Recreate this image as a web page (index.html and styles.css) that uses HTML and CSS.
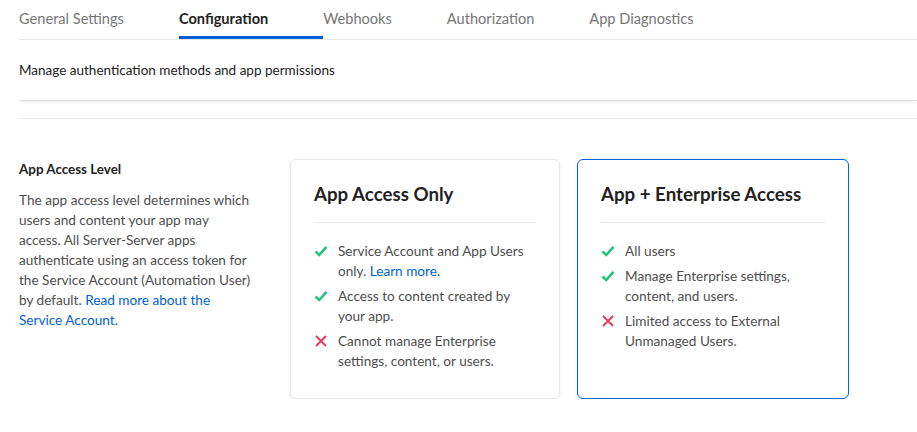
FILE: index.html
```html
<!DOCTYPE html>
<html lang="en">
<head>
  <meta charset="UTF-8">
  <meta name="viewport" content="width=device-width, initial-scale=1.0">
  <title>Configuration</title>
  <link rel="stylesheet" href="styles.css">
</head>
<body>
  <div class="page">
    <nav class="tabs">
      <a class="tab">General Settings</a>
      <a class="tab active">Configuration</a>
      <a class="tab">Webhooks</a>
      <a class="tab">Authorization</a>
      <a class="tab">App Diagnostics</a>
    </nav>

    <div class="page-header">
      <p class="subtitle">Manage authentication methods and app permissions</p>
    </div>

    <div class="section">
      <div class="section-info">
        <h2>App Access Level</h2>
        <p>The app access level determines which users and content your app may access. All Server-Server apps authenticate using an access token for the Service Account (Automation User) by default. <a href="#">Read more about the Service Account</a>.</p>
      </div>

      <div class="cards">
        <div class="card">
          <h3>App Access Only</h3>
          <ul class="features">
            <li>
              <svg class="icon" viewBox="0 0 14 14"><path d="M1.5 7.5 L5.2 11 L12.5 2.8" class="check"/></svg>
              <span>Service Account and App Users only. <a href="#">Learn more.</a></span>
            </li>
            <li>
              <svg class="icon" viewBox="0 0 14 14"><path d="M1.5 7.5 L5.2 11 L12.5 2.8" class="check"/></svg>
              <span>Access to content created by your app.</span>
            </li>
            <li>
              <svg class="icon" viewBox="0 0 14 14"><path d="M2 2 L12 12 M12 2 L2 12" class="cross"/></svg>
              <span>Cannot manage Enterprise settings, content, or users.</span>
            </li>
          </ul>
        </div>

        <div class="card selected">
          <h3>App + Enterprise Access</h3>
          <ul class="features">
            <li>
              <svg class="icon" viewBox="0 0 14 14"><path d="M1.5 7.5 L5.2 11 L12.5 2.8" class="check"/></svg>
              <span>All users</span>
            </li>
            <li>
              <svg class="icon" viewBox="0 0 14 14"><path d="M1.5 7.5 L5.2 11 L12.5 2.8" class="check"/></svg>
              <span>Manage Enterprise settings, content, and users.</span>
            </li>
            <li>
              <svg class="icon" viewBox="0 0 14 14"><path d="M2 2 L12 12 M12 2 L2 12" class="cross"/></svg>
              <span>Limited access to External Unmanaged Users.</span>
            </li>
          </ul>
        </div>
      </div>
    </div>
  </div>
</body>
</html>
```

FILE: styles.css
```css
body {
  font-family: Lato, "Open Sans", sans-serif;
  background-color: #fff;
  color: #222;
  margin: 0;
  padding: 0;
}

a {
  color: #0061d5;
  text-decoration: none;
}

.page {
  padding-left: 19px;
}

.tabs {
  display: flex;
  height: 39px;
  border-bottom: 1px solid #e8e8e8;
}

.tab {
  padding: 9px 55px 8px 0;
  line-height: 20px;
  font-size: 14.6px;
  color: #767676;
  border-bottom: 3px solid transparent;
  cursor: pointer;
}

.tab.active {
  color: #222;
  font-weight: bold;
  border-bottom-color: #0061d5;
}

.page-header {
  height: 60px;
  border-bottom: 1px solid #e2e2e2;
  box-shadow: 0 3px 3px -2px rgba(0, 0, 0, 0.1);
}

.subtitle {
  margin: 0;
  padding-top: 20px;
  line-height: 20px;
  font-size: 13.5px;
  color: #222;
}

.section {
  display: flex;
  margin-top: 17px;
  padding-top: 40px;
  border-top: 1px solid #e8e8e8;
}

.section-info {
  width: 234px;
  margin-right: 37px;
}

.section-info h2 {
  margin: 0 0 11px;
  font-size: 13.4px;
  line-height: 20px;
  font-weight: bold;
  color: #222;
}

.section-info p {
  margin: 0;
  font-size: 13.6px;
  line-height: 20px;
  color: #4e4e4e;
}

.cards {
  display: flex;
  gap: 17px;
}

.card {
  box-sizing: border-box;
  width: 270px;
  height: 240px;
  padding: 24px 23px 23px;
  border: 1px solid #e8e8e8;
  border-radius: 6px;
  box-shadow: 0 1px 4px rgba(0, 0, 0, 0.06);
}

.card.selected {
  width: 272px;
  border-color: #0061d5;
}

.card h3 {
  margin: 0;
  padding-bottom: 18px;
  border-bottom: 1px solid #e8e8e8;
  font-size: 18.7px;
  line-height: 20px;
  font-weight: bold;
  color: #222;
}

.features {
  list-style: none;
  margin: 18px 0 0;
  padding: 0;
}

.features li {
  display: flex;
  align-items: flex-start;
  margin-bottom: 5px;
  font-size: 13.6px;
  line-height: 20px;
  color: #4e4e4e;
}

.icon {
  flex: none;
  width: 14px;
  height: 14px;
  margin: 3px 10px 0 0;
}

.check {
  fill: none;
  stroke: #26c281;
  stroke-width: 2.6;
}

.cross {
  fill: none;
  stroke: #ed3757;
  stroke-width: 1.8;
}
```
